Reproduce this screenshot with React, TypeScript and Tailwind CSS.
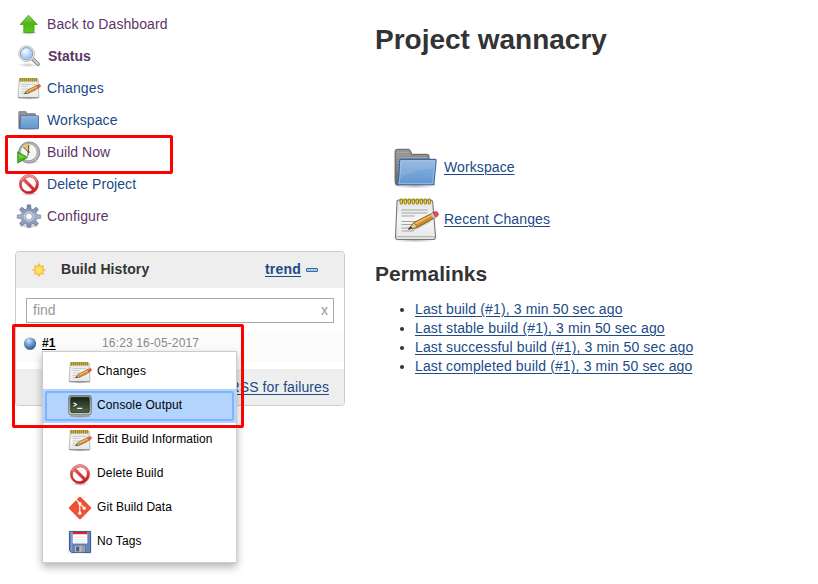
import type { ReactNode } from "react";

function Svg({ size = 24, box = 24, children }: { size?: number; box?: number; children: ReactNode }) {
  return (
    <svg width={size} height={size} viewBox={`0 0 ${box} ${box}`} className="block shrink-0 overflow-visible">
      {children}
    </svg>
  );
}

function Gradients() {
  return (
    <svg width="0" height="0" className="absolute">
      <defs>
        <linearGradient id="green" x2="0" y2="1"><stop stopColor="#8fd94f" /><stop offset=".5" stopColor="#4fb416" /><stop offset="1" stopColor="#5cc81c" /></linearGradient>
        <linearGradient id="paper" x2="0" y2="1"><stop stopColor="#e4e4e4" /><stop offset=".5" stopColor="#f6f6f6" /><stop offset="1" stopColor="#e6e6e6" /></linearGradient>
        <linearGradient id="folder" x2="0" y2="1"><stop stopColor="#8db3dd" /><stop offset="1" stopColor="#6197d0" /></linearGradient>
        <linearGradient id="folderBack" x2="0" y2="1"><stop stopColor="#999" /><stop offset="1" stopColor="#666" /></linearGradient>
        <linearGradient id="red" x2="0" y2="1"><stop stopColor="#f08a8a" /><stop offset=".5" stopColor="#d93a3a" /><stop offset="1" stopColor="#c80e12" /></linearGradient>
        <linearGradient id="gear" x2="0" y2="1"><stop stopColor="#6f7f9e" /><stop offset=".5" stopColor="#a2b0cc" /><stop offset="1" stopColor="#8088aa" /></linearGradient>
        <linearGradient id="screen" x2="0" y2="1"><stop stopColor="#18261a" /><stop offset=".5" stopColor="#2f432c" /><stop offset="1" stopColor="#4d6746" /></linearGradient>
        <linearGradient id="bezel" x2="0" y2="1"><stop stopColor="#8b8c85" /><stop offset="1" stopColor="#c4c5bd" /></linearGradient>
        <radialGradient id="ball" cx=".4" cy=".28" r=".75"><stop stopColor="#dbe8f7" /><stop offset=".35" stopColor="#86acd9" /><stop offset=".8" stopColor="#3f6cab" /><stop offset="1" stopColor="#2a4c85" /></radialGradient>
        <radialGradient id="sun"><stop stopColor="#fff27c" /><stop offset="1" stopColor="#ffd43e" /></radialGradient>
        <radialGradient id="glass" cx=".4" cy=".35"><stop stopColor="#f0f7ff" /><stop offset="1" stopColor="#a9c9ee" /></radialGradient>
        <radialGradient id="shade"><stop stopColor="#000" stopOpacity=".3" /><stop offset="1" stopColor="#000" stopOpacity="0" /></radialGradient>
      </defs>
    </svg>
  );
}

function UpIcon() {
  return (
    <Svg>
      <ellipse cx="12" cy="21" rx="9" ry="1.8" fill="url(#shade)" />
      <path d="M11.5 3.2 20.3 12.5H17v8H6.8v-8H3.2z" fill="url(#green)" stroke="#3f9a14" strokeWidth=".8" strokeLinejoin="round" />
    </Svg>
  );
}

function SearchIcon() {
  return (
    <Svg>
      <ellipse cx="11" cy="21" rx="10" ry="2.2" fill="url(#shade)" opacity=".7" />
      <path d="m15 14.4 6 5.8" stroke="#888" strokeWidth="3.8" strokeLinecap="round" />
      <path d="m16 15.2 5 4.8" stroke="#d0d0d0" strokeWidth="1.8" strokeLinecap="round" />
      <circle cx="9.6" cy="9.7" r="7.9" fill="#f3f3f3" stroke="#b0b0b0" strokeWidth=".8" />
      <circle cx="9.6" cy="9.7" r="6.2" fill="url(#glass)" stroke="#7d9cc9" strokeWidth="1" />
      <path d="M5.4 9.2C6 6 9.3 4.6 12.3 5.7 10 6.2 7.2 7.5 5.4 9.2z" fill="#fff" opacity=".8" />
    </Svg>
  );
}

function NotepadIcon() {
  return (
    <Svg>
      <ellipse cx="12" cy="22.4" rx="10" ry="1.3" fill="url(#shade)" />
      <path d="M2.3 3.2h18.8l.9 18.3H1z" fill="url(#paper)" stroke="#a5a5a5" strokeWidth=".7" />
      <path d="M1.4 21.8h20.3" stroke="#858585" strokeWidth=".9" />
      <path d="M4.5 8.5h14M4.5 10.5h7M4.5 13h9M4.5 15.5h6M4.5 17.5h7" stroke="#c3c3c3" strokeWidth=".8" />
      <rect x="2.2" y="2" width="18.2" height="3.5" fill="#c9b756" />
      {[3, 5, 7, 9, 11, 13, 15, 17, 19].map((x) => (
        <path key={x} d={`M${x + 0.3} 2v3.5`} stroke="#82701d" strokeWidth=".8" />
      ))}
      <path d="m9 17.8 10-4" stroke="#000" strokeOpacity=".18" strokeWidth="1.6" />
      <path d="m7.6 17.7 2.7-3.5 9.5-4.9 1.6 2.9-9.5 4.7z" fill="#d99332" stroke="#8a622b" strokeWidth=".6" />
      <path d="m10.5 14.7 9.1-4.4.5.7-9 4.4z" fill="#f4c778" />
      <path d="m7.6 17.7 2.7-3.5 1.6 2.7z" fill="#dac79a" stroke="#775d35" strokeWidth=".5" />
      <path d="m7.5 17.8 1.4-1.7.8 1.1z" fill="#333" />
      <path d="m19.5 9.5 2.2-1q1.3-.4 1.8.8t-.5 1.9l-2 .9z" fill="#e86147" stroke="#d44934" strokeWidth=".4" />
    </Svg>
  );
}

function LargeNotepadIcon() {
  return (
    <Svg size={48} box={48}>
      <ellipse cx="24" cy="45" rx="21" ry="2.6" fill="url(#shade)" />
      <path d="M7.5 5h32q2 0 2.2 2.2L44.5 41q.2 3.5-2 3.5h-36q-2.2 0-2-3L6 7.2Q6 5 7.5 5z" fill="url(#paper)" stroke="#777" strokeWidth="1.1" />
      <path d="M5.2 41.7h38.6" stroke="#aaa" strokeWidth="1.1" />
      <path d="M10.5 15h26M10.5 18h26M10.5 21h13M10.5 26.5h22M10.5 29.5h11M10.5 33h9M10.5 36h12" stroke="#a3a3a3" strokeWidth="1" />
      {[10.3, 14.3, 18.3, 22.3, 26.3, 30.3, 34.3, 38.3].map((x) => (
        <rect key={x} x={x - 1.2} y="3.8" width="2.4" height="5.3" rx="1.2" fill="#eedb54" stroke="#826c00" strokeWidth=".9" />
      ))}
      <path d="m21 35 18-9" stroke="#000" strokeOpacity=".15" strokeWidth="3" />
      <path d="m17.5 34.2 5.5-6.7L42 17.8l2.7 4.6-18.4 10z" fill="#c98b31" stroke="#754c18" strokeWidth=".8" />
      <path d="m23 28.3 19.3-9.8.7 1.2L24 30z" fill="#efbd66" />
      <path d="m17.5 34.2 5.5-6.7 3.3 4.9z" fill="#e9cb92" stroke="#754c18" strokeWidth=".6" />
      <path d="m17.1 34.4 2.8-3.2 1.3 1.8z" fill="#333" />
      <path d="m39.8 18.9 2.6-1.4 2.7 4.7-2.6 1.4z" fill="#c6c9cc" />
      <path d="m42 17.6 2-.9q2-.5 3 1.3t-.5 3.2l-1.9.9z" fill="#ec4a55" stroke="#c51c26" strokeWidth=".6" />
    </Svg>
  );
}

function FolderIcon() {
  return (
    <Svg>
      <ellipse cx="12" cy="21.2" rx="11.5" ry="1.4" fill="url(#shade)" />
      <path d="M1.8 20.5V4.3q0-.8.8-.8h6q.8 0 .9.8l.4 1.2h7.8q.8 0 .8.8v13z" fill="url(#folderBack)" stroke="#777" strokeWidth=".7" />
      <path d="M3.5 7.8h18v12.8H2.5q1-1 1-12.8z" fill="url(#folder)" stroke="#4474b0" strokeWidth=".9" strokeLinejoin="round" />
      <path d="M4.4 8.7h16.2" stroke="#b5d0ed" strokeWidth=".5" />
    </Svg>
  );
}

function LargeFolderIcon() {
  return (
    <Svg size={48} box={48}>
      <ellipse cx="24" cy="42.6" rx="23" ry="3" fill="url(#shade)" />
      <path d="M5.5 42q-1.5-1-1.4-3.5V8.5q0-2.2 2.2-2.2h11.2q1.3 0 1.8 1.2l1.5 3.8h15.4q1.8 0 1.8 2V40z" fill="url(#folderBack)" stroke="#606060" strokeWidth="1" />
      <path d="M6 9.5h12M6 12h13M6 14.5h29M6 17.5h3M6 20.5h2M6 23.5h2M6 26.5h2" stroke="#bbb" strokeOpacity=".65" strokeWidth=".7" />
      <path d="M10 16.4h34.3q.9 0 .8 1l-2.2 24.4H6q2-2 2.6-24 .1-1.4 1.4-1.4z" fill="url(#folder)" stroke="#3868a8" strokeWidth="1.1" strokeLinejoin="round" />
      <path d="M9.8 17.7h34L41.8 40.6H7.9q1.5-5 1.9-22.9z" fill="none" stroke="#b7d0ec" strokeWidth=".6" />
      <path d="M10 18h33.3l-.7 7.5q-18 .5-32.6 9z" fill="#fff" opacity=".1" />
    </Svg>
  );
}

function ClockIcon() {
  return (
    <Svg>
      <ellipse cx="13" cy="21.8" rx="10" ry="2" fill="url(#shade)" />
      <circle cx="12.2" cy="12.5" r="10.6" fill="#b6b6bf" stroke="#7a7a82" strokeWidth=".8" />
      <circle cx="11.7" cy="12.2" r="8.5" fill="#f5f5f1" stroke="#8b8b94" strokeWidth=".7" />
      <path d="M11.6 11.8 6.3 6.8Q8.5 4.2 12 4z" fill="#ebc354" />
      <path d="m6.2 6.9 5.2 5.3.5-7.3M11.6 12.2l-1 4" fill="none" stroke="#454540" strokeWidth=".9" />
      <circle cx="11.6" cy="12.2" r="1.1" fill="#555" />
      <path d="M.7 11.8 10.6 17.4.7 23z" fill="#4db81d" stroke="#29850e" strokeWidth=".8" />
      <path d="m1.7 13.5 6.8 3.9-6.8 1z" fill="#8cdc55" opacity=".6" />
    </Svg>
  );
}

function NoIcon() {
  return (
    <Svg>
      <ellipse cx="12" cy="22" rx="9" ry="1.8" fill="url(#shade)" />
      <path transform="translate(0 .4)" fillRule="evenodd" d="M12 2.2a9.6 9.6 0 1 0 0 19.2 9.6 9.6 0 0 0 0-19.2zM7.9 6.2l9.6 9.6A6.8 6.8 0 0 0 7.9 6.2zM5.9 8.2a6.8 6.8 0 0 0 9.6 9.5z" fill="url(#red)" stroke="#c94b4e" strokeWidth=".7" />
      <path d="M4 8.9a8.8 8.8 0 0 1 15.8-.2" fill="none" stroke="#f9c3c3" strokeWidth=".6" />
    </Svg>
  );
}

function GearIcon() {
  return (
    <Svg>
      <ellipse cx="12" cy="22" rx="10" ry="2" fill="url(#shade)" />
      <g fill="url(#gear)" stroke="#667698" strokeWidth=".5" strokeLinejoin="round">
        <path fillRule="evenodd" d="M10.3.8h3.4l.5 4 1.8.8 3.2-2.5 2.4 2.4-2.5 3.2.7 1.8 3.9.5v3.3l-3.9.5-.8 1.8 2.5 3.2-2.4 2.4-3.2-2.5-1.8.8-.5 3h-3.3l-.5-3-1.8-.8-3.2 2.5-2.4-2.4 2.5-3.2-.8-1.8-3.9-.5V11l3.9-.5.8-1.8-2.5-3.2 2.4-2.4L8 5.6l1.8-.8zM12 9.1a3.4 3.4 0 1 0 0 6.8 3.4 3.4 0 0 0 0-6.8z" />
        <circle cx="12" cy="12.5" r="4.6" fill="none" stroke="#dce3f1" strokeWidth=".8" />
      </g>
    </Svg>
  );
}

function SunIcon() {
  return (
    <Svg size={16} box={16}>
      {[0, 45, 90, 135, 180, 225, 270, 315].map((a) => (
        <path key={a} d="m8 .8 1.8 3.7H6.2z" transform={`rotate(${a} 8 8)`} fill="#f6b65a" />
      ))}
      <circle cx="8" cy="8" r="4.5" fill="url(#sun)" stroke="#f2b054" strokeWidth=".8" />
    </Svg>
  );
}

function TerminalIcon() {
  return (
    <Svg>
      <ellipse cx="12" cy="22.6" rx="10" ry="1.4" fill="url(#shade)" />
      <path d="M3.5 19h17l.8 3.6H2.7z" fill="#b5b5b0" stroke="#888" strokeWidth=".4" />
      <rect x=".7" y="1.6" width="22.6" height="19.2" rx="2.2" fill="url(#bezel)" stroke="#6d6f69" strokeWidth=".8" />
      <rect x="2.8" y="3.6" width="18.4" height="14.8" rx=".8" fill="url(#screen)" stroke="#151e14" strokeWidth=".7" />
      <path d="M3.5 9h17M3.5 12h17M3.5 15h17" stroke="#7d9470" strokeWidth=".4" opacity=".4" />
      <path d="m5.5 8.8 3 1.8-3 1.8M9.2 14.4h5" fill="none" stroke="#fff" strokeWidth="1.1" />
    </Svg>
  );
}

function GitIcon() {
  return (
    <Svg>
      <rect x="3.7" y="3.7" width="16.6" height="16.6" rx="1.2" transform="rotate(45 12 12)" fill="#f05033" />
      <path d="m8.3 3.9 3.5 3.4v10.1M12 7.9l4.3 4.2" fill="none" stroke="#fff" strokeWidth="1.2" />
      <g fill="#fff"><circle cx="11.8" cy="7.6" r="1.6" /><circle cx="11.8" cy="17.2" r="1.6" /><circle cx="16.2" cy="12.2" r="1.6" /></g>
    </Svg>
  );
}

function FloppyIcon() {
  return (
    <Svg>
      <path fill="#efefef" d="M0 0h24v24H0z" />
      <path d="M1.5 1.5h21v21h-19l-2-2z" fill="#6688c0" stroke="#345487" strokeWidth=".9" />
      <path d="M2.4 2.4h1.2v18" stroke="#91add7" strokeWidth=".7" fill="none" />
      <path d="M4.7 2h14.6v11.5H4.7z" fill="#fff" />
      <path d="M4.7 2h14.6v2.2H4.7z" fill="#e42320" />
      <path d="M6.2 7.3h11.6M6.2 9.5h11.6M6.2 11.7h11.6" stroke="#ddd" strokeWidth=".7" />
      <path d="M6.3 15.2h11v7.2h-11z" fill="#b8bbc0" stroke="#4c5870" strokeWidth=".6" />
      <path d="M8.2 16.6h3v4.8h-3z" fill="#405c8c" /><path d="M13.5 15.6h3.4v6.4h-3.4z" fill="#999ca3" />
    </Svg>
  );
}

const tasks = [
  { label: "Back to Dashboard", icon: <UpIcon />, tone: "text-[#5c3566] tracking-[0.09px]" },
  { label: "Status", icon: <SearchIcon />, tone: "text-[#5c3566] font-bold pl-px" },
  { label: "Changes", icon: <NotepadIcon />, tone: "text-[#204a87] tracking-[0.1px]" },
  { label: "Workspace", icon: <FolderIcon />, tone: "text-[#204a87] tracking-[0.09px]" },
  { label: "Build Now", icon: <ClockIcon />, tone: "text-[#5c3566]" },
  { label: "Delete Project", icon: <NoIcon />, tone: "text-[#204a87] tracking-[0.09px]" },
  { label: "Configure", icon: <GearIcon />, tone: "text-[#5c3566] tracking-[0.1px]" },
];

const menu = [
  { label: "Changes", icon: <NotepadIcon />, spacing: "tracking-[0.15px]" },
  { label: "Console Output", icon: <TerminalIcon />, active: true, spacing: "tracking-[0.13px]" },
  { label: "Edit Build Information", icon: <NotepadIcon />, spacing: "tracking-[0.07px]" },
  { label: "Delete Build", icon: <NoIcon />, spacing: "tracking-[0.15px]" },
  { label: "Git Build Data", icon: <GitIcon />, spacing: "tracking-[0.07px]" },
  { label: "No Tags", icon: <FloppyIcon />, spacing: "tracking-[0.12px]" },
];

const permalinks = ["Last build", "Last stable build", "Last successful build", "Last completed build"];

const link = "underline decoration-1 underline-offset-2 text-[#204a87]";

export default function App() {
  return (
    <div className="relative flex h-[584px] w-[818px] overflow-hidden bg-white font-['Liberation_Sans',Arial,sans-serif] text-[14px] leading-4 text-[#333]">
      <Gradients />
      <aside className="w-[345px] shrink-0 pl-[15px] pt-2">
        <nav>
          {tasks.map((t) => (
            <a key={t.label} className="flex h-8 items-center gap-1.5 pl-0.5">
              {t.icon}
              <span className={t.tone}>{t.label}</span>
            </a>
          ))}
        </nav>
        <section className="mt-[19px] h-[155px] rounded border border-[#ccc] bg-white">
          <header className="flex h-9 items-center rounded-t bg-[#eee] pl-[15px] pr-[26px]">
            <SunIcon />
            <h2 className="ml-[14px] pb-0.5 font-bold tracking-[0.09px]">Build History</h2>
            <a className={`${link} ml-auto pb-0.5 font-bold tracking-[0.2px]`}>trend</a>
            <span className="ml-[5px] h-1 w-3 rounded-[1px] border border-[#3465a4] bg-[#a9c9ee]" />
          </header>
          <div className="mx-2.5 mt-2.5 flex h-[25px] items-center justify-between border border-[#aaa] pb-0.5 pl-1.5 pr-[5px] text-[#999]">
            <span>find</span>
            <span>x</span>
          </div>
          <div className="mt-2 flex h-[31px] items-center bg-[#fbfbfb] pb-[7px] pl-2">
            <Svg size={13} box={13}><ellipse cx="6.5" cy="12.3" rx="6" ry="1" fill="url(#shade)" /><circle cx="6" cy="6.6" r="6.1" fill="url(#ball)" /></Svg>
            <a className="ml-[5px] w-[60px] text-[12px] font-bold tracking-[0.2px] text-black underline underline-offset-2">#1</a>
            <span className="text-[12px] tracking-[0.15px] text-[#888]">16:23 16-05-2017</span>
          </div>
          <footer className="mt-[7px] flex h-9 items-center justify-end rounded-b bg-[#eee] pr-[15px]">
            <a className={`${link} tracking-[0.09px]`}>RSS for failures</a>
          </footer>
        </section>
      </aside>

      <main className="pl-[30px] pt-6">
        <h1 className="text-[28px] font-bold leading-8">Project wannacry</h1>
        <div className="ml-4 mt-[87px] flex flex-col gap-1">
          <a className="flex h-12 items-center gap-[5px]"><LargeFolderIcon /><span className={`${link} tracking-[0.1px]`}>Workspace</span></a>
          <a className="flex h-12 items-center gap-[5px]"><LargeNotepadIcon /><span className={`${link} tracking-[0.13px]`}>Recent Changes</span></a>
        </div>
        <h2 className="mt-[19px] text-[21px] font-bold leading-6">Permalinks</h2>
        <ul className="mt-[14px] list-disc pl-10 tracking-[0.135px]">
          {permalinks.map((p) => (
            <li key={p} className="h-[19px] leading-[19px]"><a className={link}>{p} (#1), 3 min 50 sec ago</a></li>
          ))}
        </ul>
      </main>

      <div className="absolute left-[42px] top-[351px] h-[212px] w-[195px] border border-[#ccc] bg-white pt-[3px] text-[12px] text-black shadow-[0_4px_8px_rgba(0,0,0,0.3)]">
        {menu.map((m) => (
          <div key={m.label} className={m.active ? "h-[34px] bg-[#b3d4ff] p-0.5" : "h-[34px] p-0.5"}>
            <div className={`flex h-[30px] items-center gap-[5px] rounded-[2px] border-2 pl-[21px] ${m.active ? "border-[#7fb2ff]" : "border-transparent"}`}>
              {m.icon}
              <span className={`pb-0.5 ${m.spacing}`}>{m.label}</span>
            </div>
          </div>
        ))}
      </div>
      <div className="absolute left-[5px] top-[135px] h-[39px] w-[168px] rounded-[2px] border-3 border-[#ff0000]" />
      <div className="absolute left-[12px] top-[324px] h-[104px] w-[232px] rounded-[2px] border-3 border-[#ff0000]" />
    </div>
  );
}
